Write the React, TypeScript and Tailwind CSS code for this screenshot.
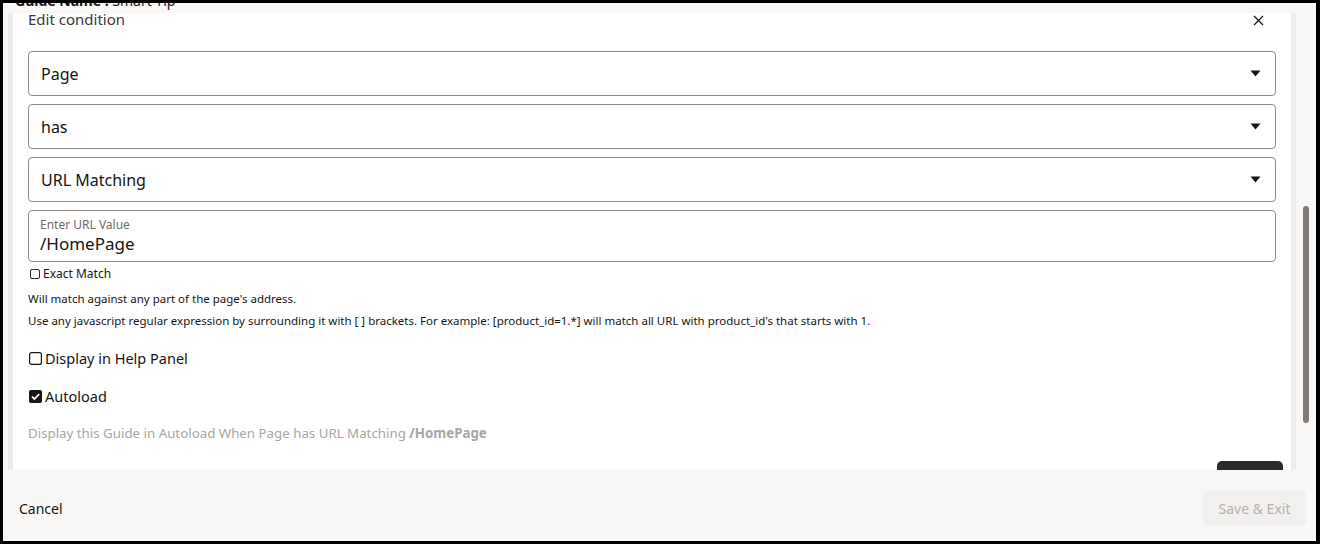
import React from "react";

const FONT = "font-['Noto_Sans','Open_Sans',sans-serif]";

function Caret() {
  return (
    <svg width="11" height="7" viewBox="0 0 11 7" className="shrink-0">
      <path d="M0.5 0.5h10L5.5 6.5z" fill="#161513" />
    </svg>
  );
}

function SelectField({ value }: { value: string }) {
  return (
    <div className="flex h-[45px] items-center justify-between rounded-[4px] border border-[#8d8a86] bg-white pl-[12px] pr-[14px]">
      <span className="text-[16px] text-[#161513]">{value}</span>
      <Caret />
    </div>
  );
}

function Box({ checked, size }: { checked?: boolean; size: number }) {
  if (checked) {
    return (
      <svg width={size} height={size} viewBox="0 0 13 13" className="shrink-0">
        <rect x="0" y="0" width="13" height="13" rx="2" fill="#161513" />
        <path d="M3 6.6l2.4 2.4L10.2 4" stroke="#fff" strokeWidth="1.8" fill="none" />
      </svg>
    );
  }
  return (
    <svg width={size} height={size} viewBox="0 0 13 13" className="shrink-0">
      <rect x="0.6" y="0.6" width="11.8" height="11.8" rx="2" fill="#fff" stroke="#161513" strokeWidth="1.2" />
    </svg>
  );
}

export default function App() {
  return (
    <div className={`h-[544px] w-[1320px] overflow-hidden bg-black pt-[3px] pb-[3px] pl-[3px] pr-[4px] ${FONT}`}>
      <div className="flex h-full flex-col bg-[#f9f8f6]">
        {/* page header, mostly hidden behind the dialog */}
        <div className="h-[10px] shrink-0 overflow-hidden pl-[12px]">
          <p className="-mt-[12px] text-[14px] leading-[20px] text-[#161513]">
            <span className="font-bold">Guide Name :</span> Smart Tip
          </p>
        </div>

        <div className="flex min-h-0 flex-1">
          <div className="flex w-[10px] shrink-0 justify-end">
            <div className="w-[5px] bg-[#efedea]" />
          </div>

          {/* dialog */}
          <div className="flex min-w-0 flex-1 flex-col bg-white">
            <div className="flex h-[14px] shrink-0 items-center justify-between pl-[15px] pr-[27px]">
              <span className="-mt-[2px] text-[15px] leading-[15px] text-[#3a3937]">Edit condition</span>
              <svg width="11" height="11" viewBox="0 0 11 11">
                <path d="M1 1l9 9M10 1l-9 9" stroke="#161513" strokeWidth="1.3" />
              </svg>
            </div>

            <div className="flex min-h-0 flex-1 flex-col overflow-hidden pl-[15px] pr-[15px] pt-[24px]">
              <div className="flex flex-col gap-[8px]">
                <SelectField value="Page" />
                <SelectField value="has" />
                <SelectField value="URL Matching" />
                <div className="flex h-[52px] flex-col justify-center rounded-[4px] border border-[#8d8a86] bg-white px-[11px]">
                  <span className="text-[12px] leading-[16px] text-[#6f6c69]">Enter URL Value</span>
                  <span className="text-[17px] leading-[22px] text-[#161513]">/HomePage</span>
                </div>
              </div>

              <label className="mt-[4px] flex items-center gap-[3px] pl-[2px] text-[12px] leading-[16px] text-[#161513]">
                <Box size={10} />
                Exact Match
              </label>

              <p className="mt-[9px] text-[11.5px] leading-[16px] text-[#161513]">
                Will match against any part of the page's address.
              </p>
              <p className="mt-[6px] text-[11.5px] leading-[16px] text-[#161513]">
                Use any javascript regular expression by surrounding it with [ ] brackets. For example: [product_id=1.*] will match all URL with product_id's that starts with 1.
              </p>

              <label className="mt-[19px] flex items-center gap-[3px] pl-[1px] text-[14.5px] leading-[20px] text-[#161513]">
                <Box size={13} />
                Display in Help Panel
              </label>
              <label className="mt-[18px] flex items-center gap-[3px] pl-[1px] text-[14.5px] leading-[20px] text-[#161513]">
                <Box size={13} checked />
                Autoload
              </label>

              <p className="mt-[17px] text-[13.3px] leading-[20px] text-[#a9a6a2]">
                Display this Guide in Autoload When Page has URL Matching <span className="font-bold">/HomePage</span>
              </p>

              {/* dialog action button, scrolled mostly out of view */}
              <div className="mt-[18px] flex shrink-0 justify-end">
                <button aria-label="Done" className="-mr-[7px] h-[34px] w-[66px] shrink-0 rounded-[5px] bg-[#2b2a28]" />
              </div>
            </div>
          </div>

          {/* scrollbar */}
          <div className="flex w-[25px] shrink-0 bg-[#f9f8f6]">
            <div className="w-[5px] bg-[#f0eeec]" />
            <div className="flex flex-1 justify-center pt-[193px]">
              <div className="h-[217px] w-[6px] rounded-full bg-[#7f7c79]" />
            </div>
          </div>
        </div>

        {/* footer */}
        <div className="flex h-[71px] shrink-0 items-center justify-between pl-[16px] pr-[10px] pt-[5px]">
          <span className="text-[14px] text-[#161513]">Cancel</span>
          <button className="h-[35px] w-[103px] rounded-[5px] bg-[#f2f0ee] text-[14px] text-[#b5b1ad]">
            Save &amp; Exit
          </button>
        </div>
      </div>
    </div>
  );
}
